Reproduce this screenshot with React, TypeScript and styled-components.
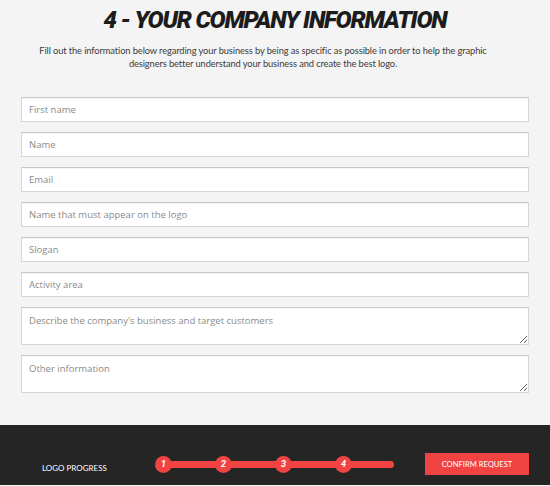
import React from "react";
import styled, { createGlobalStyle } from "styled-components";

const GlobalStyle = createGlobalStyle`
  html, body {
    margin: 0;
    padding: 0;
    background: #f4f4f4;
  }
  * {
    box-sizing: border-box;
  }
`;

const Page = styled.div`
  display: flex;
  flex-direction: column;
  width: 550px;
  min-height: 486px;
`;

const Content = styled.section`
  padding: 6px 21px 0 21px;
  display: flex;
  flex-direction: column;
  align-items: center;
`;

const Title = styled.h1`
  margin: 0;
  font-family: "Roboto", sans-serif;
  font-weight: 900;
  font-style: italic;
  font-size: 24px;
  line-height: 28px;
  letter-spacing: -1.2px;
  color: #1c1c1c;
  text-transform: uppercase;
`;

const Intro = styled.p`
  margin: 10px 24px 0 0;
  width: 472px;
  font-family: "Lato", sans-serif;
  font-size: 9.3px;
  letter-spacing: -0.1px;
  line-height: 13px;
  color: #3a3a3a;
  text-align: center;
`;

const Form = styled.form`
  margin-top: 27px;
  width: 100%;
  display: flex;
  flex-direction: column;
  gap: 10px;
`;

const fieldStyle = `
  width: 100%;
  border: 1px solid #d6d6d6;
  border-top-color: #c8c8c8;
  background: #fff;
  font-family: "Open Sans", sans-serif;
  font-size: 9.5px;
  color: #555;
  padding: 0 7px;
  outline: none;
  box-shadow: inset 0 1px 1px rgba(0, 0, 0, 0.04);
  &::placeholder {
    color: #8a8a8a;
  }
`;

const TextInput = styled.input`
  ${fieldStyle}
  height: 25px;
`;

const TextArea = styled.textarea`
  ${fieldStyle}
  height: 38px;
  padding-top: 6px;
  resize: vertical;
  display: block;
`;

const Footer = styled.footer`
  margin-top: 32px;
  height: 60px;
  background: #252525;
  display: flex;
  align-items: center;
  padding: 18px 21px 0 42px;
`;

const ProgressLabel = styled.span`
  font-family: "Lato", sans-serif;
  font-size: 8px;
  color: #fff;
  text-transform: uppercase;
  width: 113px;
  margin-top: 8px;
`;

const Track = styled.div`
  position: relative;
  width: 239px;
  height: 18px;
  display: flex;
  align-items: center;
`;

const TrackBar = styled.div`
  position: absolute;
  left: 8px;
  right: 0;
  top: 6px;
  height: 7px;
  border-radius: 4px;
  background: #f24343;
`;

const Steps = styled.div`
  position: relative;
  display: flex;
  gap: 43px;
`;

const Step = styled.span`
  width: 17px;
  height: 17px;
  border-radius: 50%;
  background: #f24343;
  color: #fff;
  font-family: "Roboto", sans-serif;
  font-weight: 700;
  font-style: italic;
  font-size: 9px;
  display: flex;
  align-items: center;
  justify-content: center;
`;

const ConfirmButton = styled.button`
  margin-left: auto;
  width: 104px;
  height: 22px;
  border: none;
  background: #f24343;
  color: #fff;
  font-family: "Lato", sans-serif;
  font-size: 7.6px;
  text-transform: uppercase;
  cursor: pointer;
`;

const fields = [
  "First name",
  "Name",
  "Email",
  "Name that must appear on the logo",
  "Slogan",
  "Activity area",
];

export default function App() {
  return (
    <Page>
      <GlobalStyle />
      <Content>
        <Title>4 - Your company information</Title>
        <Intro>
          Fill out the information below regarding your business by being as
          specific as possible in order to help the graphic designers better
          understand your business and create the best logo.
        </Intro>
        <Form>
          {fields.map((f) => (
            <TextInput key={f} placeholder={f} />
          ))}
          <TextArea placeholder="Describe the company's business and target customers" />
          <TextArea placeholder="Other information" />
        </Form>
      </Content>
      <Footer>
        <ProgressLabel>Logo progress</ProgressLabel>
        <Track>
          <TrackBar />
          <Steps>
            {[1, 2, 3, 4].map((n) => (
              <Step key={n}>{n}</Step>
            ))}
          </Steps>
        </Track>
        <ConfirmButton type="button">Confirm request</ConfirmButton>
      </Footer>
    </Page>
  );
}
